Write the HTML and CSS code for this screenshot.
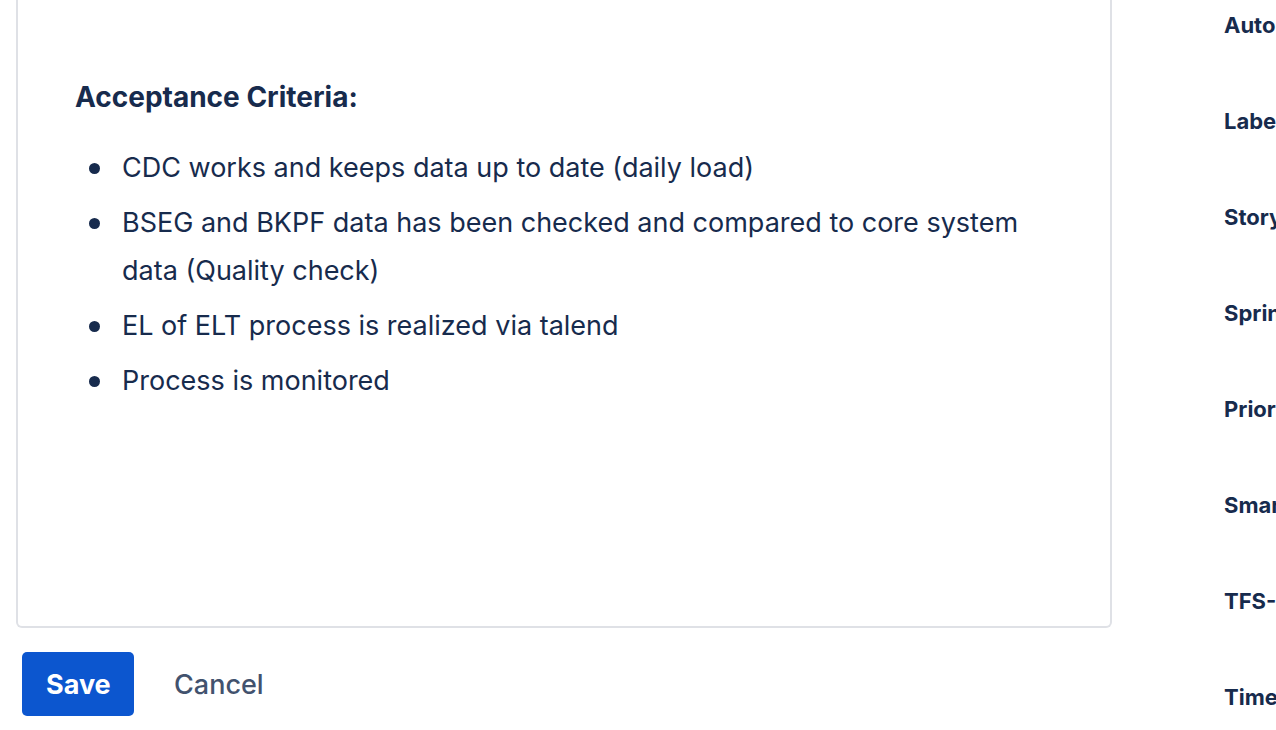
FILE: index.html
```html
<!DOCTYPE html>
<html lang="en">
<head>
<meta charset="utf-8">
<title>Issue description editor</title>
<link rel="stylesheet" href="styles.css">
</head>
<body>
<div class="page">
  <main class="main">
    <div class="editor">
      <h3 class="editor-heading">Acceptance Criteria:</h3>
      <ul class="criteria">
        <li>CDC works and keeps data up to date (daily load)</li>
        <li>BSEG and BKPF data has been checked and compared to core system data (Quality check)</li>
        <li>EL of ELT process is realized via talend</li>
        <li>Process is monitored</li>
      </ul>
    </div>
    <div class="actions">
      <button class="btn btn-primary" type="button">Save</button>
      <button class="btn btn-subtle" type="button">Cancel</button>
    </div>
  </main>
  <aside class="sidebar">
    <div class="field-label">Automation</div>
    <div class="field-label">Labels</div>
    <div class="field-label">Story Points</div>
    <div class="field-label">Sprint</div>
    <div class="field-label">Priority</div>
    <div class="field-label">Smart Checklist</div>
    <div class="field-label">TFS-Link</div>
    <div class="field-label">Time tracking</div>
  </aside>
</div>
</body>
</html>
```

FILE: styles.css
```css
html, body {
  margin: 0;
  padding: 0;
  background: #ffffff;
  overflow: hidden;
}

body {
  font-family: Inter, "Noto Sans", "Liberation Sans", sans-serif;
  color: #172b4d;
  width: 1276px;
  height: 730px;
}

.page {
  display: flex;
  align-items: flex-start;
  width: 1276px;
  height: 730px;
  overflow: hidden;
}

.main {
  flex: 0 0 1096px;
  padding-left: 16px;
}

.editor {
  box-sizing: border-box;
  width: 1096px;
  height: 628px;
  border: 2px solid #dfe1e6;
  border-top: none;
  border-radius: 0 0 6px 6px;
  padding: 77px 58px 0 57px;
}

.editor-heading {
  margin: 0;
  font-size: 28px;
  line-height: 40px;
  font-weight: 700;
}

.criteria {
  list-style: none;
  margin: 27px 0 0 0;
  padding: 0 0 0 47px;
}

.criteria li {
  position: relative;
  font-size: 27px;
  line-height: 48px;
}

.criteria li + li {
  margin-top: 7px;
}

.criteria li::before {
  content: "";
  position: absolute;
  left: -33px;
  top: 19px;
  width: 11px;
  height: 11px;
  border-radius: 50%;
  background: #172b4d;
}

.actions {
  display: flex;
  align-items: center;
  gap: 16px;
  margin-top: 24px;
  padding-left: 6px;
}

.btn {
  font-family: inherit;
  font-size: 27px;
  height: 64px;
  border: none;
  border-radius: 5px;
  padding: 0 24px;
  cursor: pointer;
}

.btn-primary {
  background: #0c56cf;
  color: #ffffff;
  font-weight: 700;
  width: 112px;
}

.btn-subtle {
  background: transparent;
  color: #42526e;
  font-weight: 500;
}

.sidebar {
  flex: 0 0 auto;
  margin-left: 112px;
  padding-top: 1px;
  white-space: nowrap;
}

.field-label {
  font-size: 22px;
  font-weight: 700;
  line-height: 48px;
  margin-bottom: 48px;
}
```
